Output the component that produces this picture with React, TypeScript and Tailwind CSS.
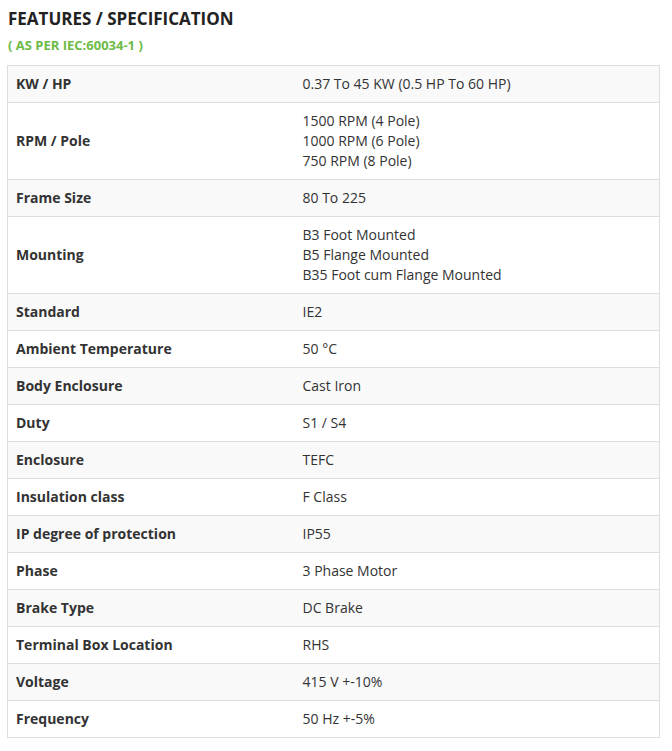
const specs: [string, string[]][] = [
  ["KW / HP", ["0.37 To 45 KW (0.5 HP To 60 HP)"]],
  ["RPM / Pole", ["1500 RPM (4 Pole)", "1000 RPM (6 Pole)", "750 RPM (8 Pole)"]],
  ["Frame Size", ["80 To 225"]],
  ["Mounting", ["B3 Foot Mounted", "B5 Flange Mounted", "B35 Foot cum Flange Mounted"]],
  ["Standard", ["IE2"]],
  ["Ambient Temperature", ["50 °C"]],
  ["Body Enclosure", ["Cast Iron"]],
  ["Duty", ["S1 / S4"]],
  ["Enclosure", ["TEFC"]],
  ["Insulation class", ["F Class"]],
  ["IP degree of protection", ["IP55"]],
  ["Phase", ["3 Phase Motor"]],
  ["Brake Type", ["DC Brake"]],
  ["Terminal Box Location", ["RHS"]],
  ["Voltage", ["415 V +-10%"]],
  ["Frequency", ["50 Hz +-5%"]],
];

export default function App() {
  return (
    <div className="min-h-screen bg-white px-[7px] pt-[8px] font-['Open_Sans',sans-serif] text-[#333]">
      <h3 className="pl-px text-[17px] font-bold leading-[22px] text-[#222]">FEATURES / SPECIFICATION</h3>
      <p className="mt-[7px] pl-px text-[13px] font-bold leading-[16px] text-[#6cbb45]">( AS PER IEC:60034-1 )</p>
      <table className="mt-[12px] w-[653px] border-collapse border border-[#ddd] text-[14px] leading-[20px]">
        <tbody>
          {specs.map(([label, values], i) => (
            <tr key={label} className={i % 2 === 0 ? "bg-[#f9f9f9]" : "bg-white"}>
              <td className="w-[287px] border-t border-[#ddd] p-[8px] align-middle font-bold">{label}</td>
              <td className="border-t border-[#ddd] p-[8px] align-middle">
                {values.map((v) => (
                  <div key={v}>{v}</div>
                ))}
              </td>
            </tr>
          ))}
        </tbody>
      </table>
    </div>
  );
}
